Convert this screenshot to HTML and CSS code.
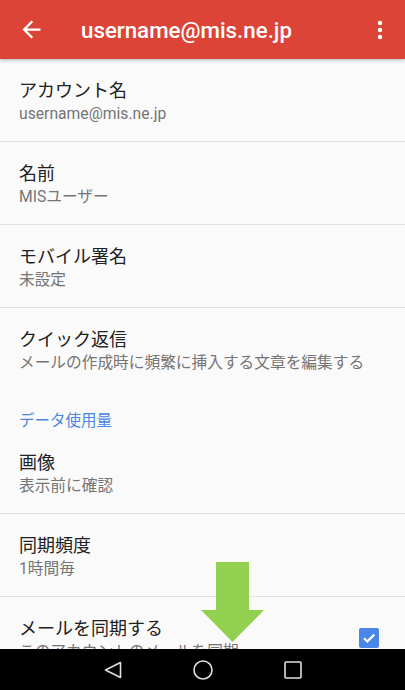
FILE: index.html
```html
<!DOCTYPE html>
<html lang="ja">
<head>
    <meta charset="UTF-8">
    <meta name="viewport" content="width=device-width, initial-scale=1.0">
    <title>アカウント設定</title>
    <link rel="stylesheet" href="styles.css">
</head>
<body>
    <div id="screen">
        <header class="appbar">
            <svg class="back" viewBox="0 0 24 24"><path d="M20 11H7.83l5.59-5.59L12 4l-8 8 8 8 1.41-1.41L7.83 13H20v-2z"/></svg>
            <div class="appbar-title">username@mis.ne.jp</div>
            <svg class="more" viewBox="0 0 24 24"><circle cx="12" cy="6" r="1.9"/><circle cx="12" cy="12" r="1.9"/><circle cx="12" cy="18" r="1.9"/></svg>
        </header>

        <div class="content">
            <div class="pref">
                <div class="pref-title">アカウント名</div>
                <div class="pref-summary">username@mis.ne.jp</div>
            </div>
            <div class="pref">
                <div class="pref-title">名前</div>
                <div class="pref-summary">MISユーザー</div>
            </div>
            <div class="pref">
                <div class="pref-title">モバイル署名</div>
                <div class="pref-summary">未設定</div>
            </div>
            <div class="pref last">
                <div class="pref-title">クイック返信</div>
                <div class="pref-summary">メールの作成時に頻繁に挿入する文章を編集する</div>
            </div>

            <div class="category">データ使用量</div>
            <div class="pref">
                <div class="pref-title">画像</div>
                <div class="pref-summary">表示前に確認</div>
            </div>
            <div class="pref">
                <div class="pref-title">同期頻度</div>
                <div class="pref-summary">1時間毎</div>
            </div>
            <div class="pref with-check">
                <div class="pref-text">
                    <div class="pref-title">メールを同期する</div>
                    <div class="pref-summary">このアカウントのメールを同期</div>
                </div>
                <div class="checkbox">
                    <svg viewBox="0 0 20 20"><path d="M5 10.2l3.3 3.3L15.2 6.6"/></svg>
                </div>
            </div>
        </div>

        <nav class="navbar">
            <svg viewBox="0 0 20 20"><path d="M17.5 2.5v15L2.5 10z"/></svg>
            <svg viewBox="0 0 20 20"><circle cx="10" cy="10" r="9"/></svg>
            <svg viewBox="0 0 20 20"><rect x="2" y="2" width="16" height="16" rx="1"/></svg>
        </nav>

        <svg class="pointer" viewBox="0 0 64 81"><polygon points="15,0 48,0 48,48 63,48 31.5,80 0,48 15,48"/></svg>
    </div>
</body>
</html>
```

FILE: styles.css
```css
body {
    margin: 0;
    font-family: Roboto, "Noto Sans CJK JP", sans-serif;
    background-color: #fafafa;
}
#screen {
    position: relative;
    height: 690px;
    display: flex;
    flex-direction: column;
    overflow: hidden;
}
.appbar {
    position: relative;
    z-index: 1;
    flex: none;
    height: 59px;
    background-color: #db4437;
    box-shadow: 0 1px 4px rgba(0, 0, 0, 0.3);
    display: flex;
    align-items: center;
    color: #fff;
}
.back {
    width: 27px;
    height: 27px;
    margin-left: 18px;
    fill: #fff;
}
.appbar-title {
    margin-left: 36px;
    font-size: 22.3px;
    font-weight: 500;
    flex: 1;
}
.more {
    width: 28px;
    height: 28px;
    margin-right: 11px;
    fill: #fff;
}
.content {
    flex: 1;
    overflow: hidden;
    background-color: #fafafa;
}
.pref {
    height: 83px;
    box-sizing: border-box;
    padding: 20px 19px 0;
    border-bottom: 1px solid #e2e2e2;
}
.pref.last {
    border-bottom: none;
}
.pref-title {
    font-size: 18px;
    line-height: 24px;
    color: #212121;
}
.pref-summary {
    font-size: 15.7px;
    line-height: 22px;
    color: #757575;
    white-space: nowrap;
}
.category {
    height: 40px;
    box-sizing: border-box;
    padding: 20px 19px 0;
    font-size: 15.5px;
    line-height: 20px;
    color: #4a86e0;
}
.with-check {
    display: flex;
    align-items: flex-start;
    padding-right: 26px;
}
.pref-text {
    flex: 1;
}
.checkbox {
    width: 20px;
    height: 20px;
    margin-top: 11px;
    border-radius: 2px;
    background-color: #4a86e8;
}
.checkbox svg {
    display: block;
    width: 20px;
    height: 20px;
    fill: none;
    stroke: #fff;
    stroke-width: 2.2;
}
.navbar {
    flex: none;
    height: 41px;
    background-color: #000;
    display: flex;
    justify-content: center;
    align-items: center;
    gap: 70px;
}
.navbar svg {
    width: 20px;
    height: 20px;
    fill: none;
    stroke: #e0e0e0;
    stroke-width: 1.6;
    stroke-linejoin: round;
}
.pointer {
    position: absolute;
    left: 201px;
    top: 562px;
    width: 64px;
    height: 81px;
    fill: #92d050;
}
```
